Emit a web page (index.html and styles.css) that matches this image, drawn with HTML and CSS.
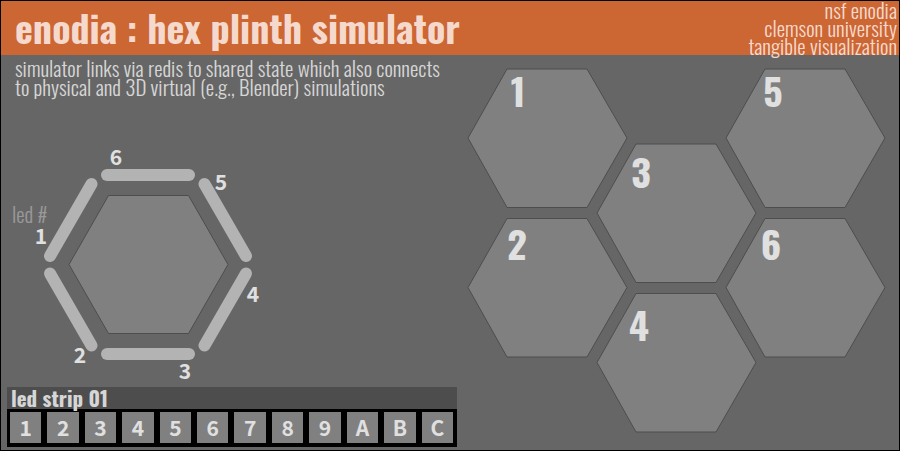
FILE: index.html
```html
<!DOCTYPE html>
<html lang="en">
<head>
<meta charset="utf-8">
<title>enodia : hex plinth simulator</title>
<link rel="stylesheet" href="styles.css">
</head>
<body>
<header class="banner">
  <h1 class="title">enodia : hex plinth simulator</h1>
  <p class="credits">nsf enodia<br>clemson university<br>tangible visualization</p>
</header>
<main class="stage">
  <section class="side">
    <p class="intro">simulator links via redis to shared state which also connects<br>to physical and 3D virtual (e.g., Blender) simulations</p>
    <svg class="ring" viewBox="0 0 450 245" role="img" aria-label="led ring">
      <path class="hex" d="M101.500 53.500H181.500L221 122.500L181.500 191.500H101.500L62 122.500Z"/>
      <g class="bars">
        <path d="M100 33H182"/>
        <path d="M197.500 42L239 114"/>
        <path d="M239 131.500L197.500 203.500"/>
        <path d="M182 212H100"/>
        <path d="M84.500 203.500L43 131.500"/>
        <path d="M43 114L84.500 42"/>
      </g>
      <text class="hint" x="5" y="81">led #</text>
      <g class="led">
        <text x="34" y="102">1</text>
        <text x="73" y="221">2</text>
        <text x="178" y="237">3</text>
        <text x="246" y="160">4</text>
        <text x="214" y="48">5</text>
        <text x="109" y="23">6</text>
      </g>
    </svg>
    <section class="strip">
      <h2 class="strip-title">led strip 01</h2>
      <div class="cells">
        <button>1</button><button>2</button><button>3</button><button>4</button>
        <button>5</button><button>6</button><button>7</button><button>8</button>
        <button>9</button><button>A</button><button>B</button><button>C</button>
      </div>
    </section>
  </section>
  <svg class="map" viewBox="0 0 442 395" role="img" aria-label="hex plinths">
    <defs><path id="hex" class="hex" d="M40 0H120L160 69L120 138.500H40L1 69Z"/></defs>
    <use href="#hex" x="10" y="14"/>
    <use href="#hex" x="10" y="163.500"/>
    <use href="#hex" x="139" y="89"/>
    <use href="#hex" x="139" y="238.500"/>
    <use href="#hex" x="268" y="14"/>
    <use href="#hex" x="268" y="163.500"/>
    <g class="num">
      <text x="61" y="52">1</text>
      <text x="60" y="205">2</text>
      <text x="184" y="133">3</text>
      <text x="182" y="286">4</text>
      <text x="316" y="52">5</text>
      <text x="314" y="205">6</text>
    </g>
  </svg>
</main>
</body>
</html>
```
FILE: styles.css
```css
:root {
  --narrow: "Oswald", "Liberation Sans Narrow", "Arial Narrow", sans-serif;
  --digits: "Noto Sans CJK JP", sans-serif;
}
* { box-sizing: border-box; margin: 0; }
body {
  min-height: 100vh;
  border: 1px solid #000;
  background: #666;
  color: #d6d6d6;
  font-family: var(--narrow);
}
.banner {
  display: flex;
  justify-content: space-between;
  align-items: center;
  height: 54px;
  padding: 0 2px 0 14px;
  background: #cc6633;
  color: #f5d9cd;
}
.title { padding-bottom: 2px; font-size: 38px; line-height: 52px; font-weight: 700; }
.credits { font-size: 21px; line-height: 18px; font-weight: 300; text-align: right; }
.stage { display: grid; grid-template-columns: 450fr 442fr; padding-left: 6px; }
.side { display: flex; flex-direction: column; }
.intro { padding: 3px 0 0 8px; font-size: 21px; line-height: 19px; font-weight: 300; margin-bottom: 46px; }
.ring, .map { display: block; width: 100%; height: auto; }
.hex { fill: #808080; stroke: #4d4d4d; stroke-width: 1; }
.bars { fill: none; stroke: #b3b3b3; stroke-width: 12; stroke-linecap: round; }
.hint { fill: #999; font-size: 21px; font-weight: 300; }
.led { fill: #e0e0e0; text-anchor: middle; font: 700 21px var(--digits); }
.num { fill: #e0e0e0; text-anchor: middle; font-size: 38px; font-weight: 700; }
.strip { background: #000; }
.strip-title { height: 22px; padding-left: 4px; background: #4d4d4d; font-size: 21px; line-height: 21px; font-weight: 700; }
.cells { display: grid; grid-template-columns: repeat(12, 1fr); gap: 6px; padding: 3px 4px 4px 3px; }
.cells button {
  height: 31px;
  padding: 0;
  border: 0;
  background: #808080;
  color: #e0e0e0;
  font: 700 21px/31px var(--digits);
}
```
